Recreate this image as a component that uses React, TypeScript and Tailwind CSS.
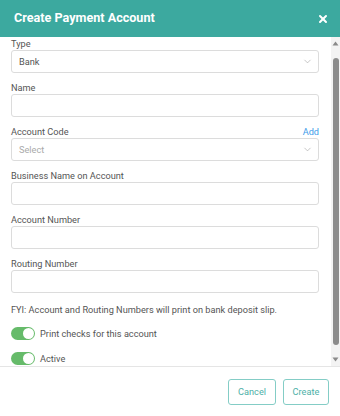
import React from "react";
import { ChevronDown, X } from "lucide-react";

function Label({ children, right }: { children: React.ReactNode; right?: React.ReactNode }) {
  return (
    <div className="flex h-[12px] items-center justify-between text-[9.2px] leading-[12px] text-[#555]">
      <span>{children}</span>
      {right}
    </div>
  );
}

function Input() {
  return <div className="h-[23px] rounded-[3px] border border-[#dcdcdc] bg-white" />;
}

function Select({ value, placeholder }: { value?: string; placeholder?: string }) {
  return (
    <div className="flex h-[23px] items-center justify-between rounded-[3px] border border-[#dcdcdc] bg-white pl-[7px] pr-[5px]">
      <span className={`text-[9.2px] ${value ? "text-[#555]" : "text-[#aaa]"}`}>{value ?? placeholder}</span>
      <ChevronDown size={11} strokeWidth={1.2} className="text-[#999]" />
    </div>
  );
}

function Toggle() {
  return (
    <div className="flex h-[13px] w-[24px] items-center justify-end rounded-full bg-[#66bb6a] p-[1px]">
      <div className="h-[11px] w-[11px] rounded-full bg-white" />
    </div>
  );
}

export default function App() {
  return (
    <div className="flex h-[416px] w-[340px] flex-col bg-white font-['Roboto',sans-serif]">
      <div className="flex h-[37px] shrink-0 items-center justify-between bg-[#3ca99f] pl-[14px] pr-[11px]">
        <span className="text-[12.6px] font-bold text-white">Create Payment Account</span>
        <X size={12} strokeWidth={4} className="text-white" />
      </div>
      <div className="flex min-h-0 flex-1">
        <div className="flex-1 overflow-hidden pl-[11px] pr-[12px] pt-[1px]">
          <div className="flex flex-col gap-[9px]">
            <div>
              <Label>Type</Label>
              <Select value="Bank" />
            </div>
            <div>
              <Label>Name</Label>
              <Input />
            </div>
            <div>
              <Label right={<span className="text-[#3d9be9]">Add</span>}>Account Code</Label>
              <Select placeholder="Select" />
            </div>
            <div>
              <Label>Business Name on Account</Label>
              <Input />
            </div>
            <div>
              <Label>Account Number</Label>
              <Input />
            </div>
            <div>
              <Label>Routing Number</Label>
              <Input />
            </div>
          </div>
          <p className="mt-[11px] text-[9.2px] leading-[12px] text-[#555]">
            FYI: Account and Routing Numbers will print on bank deposit slip.
          </p>
          <div className="mt-[11px] flex items-center gap-[5px]">
            <Toggle />
            <span className="text-[9.2px] text-[#555]">Print checks for this account</span>
          </div>
          <div className="mt-[11px] flex items-center gap-[5px]">
            <Toggle />
            <span className="text-[9.2px] text-[#555]">Active</span>
          </div>
        </div>
        <div className="flex w-[9px] shrink-0 flex-col items-center bg-[#f3f3f3] py-[4px]">
          <svg width="7" height="5" viewBox="0 0 7 5"><path d="M3.5 0.5L6.5 4.5H0.5Z" fill="#8a8a8a" /></svg>
          <div className="my-[12px] w-[6px] flex-1 rounded-full bg-[#8c8c8c]" />
          <svg width="7" height="5" viewBox="0 0 7 5"><path d="M0.5 0.5H6.5L3.5 4.5Z" fill="#8a8a8a" /></svg>
        </div>
      </div>
      <div className="flex h-[50px] shrink-0 items-center justify-end gap-[7px] border-t border-[#e5e5e5] pr-[11px]">
        <button className="h-[26px] w-[48px] rounded-[3px] border border-[#84cdc6] text-[9.2px] text-[#4db0a7]">Cancel</button>
        <button className="h-[26px] w-[46px] rounded-[3px] border border-[#84cdc6] text-[9.2px] text-[#4db0a7]">Create</button>
      </div>
    </div>
  );
}
